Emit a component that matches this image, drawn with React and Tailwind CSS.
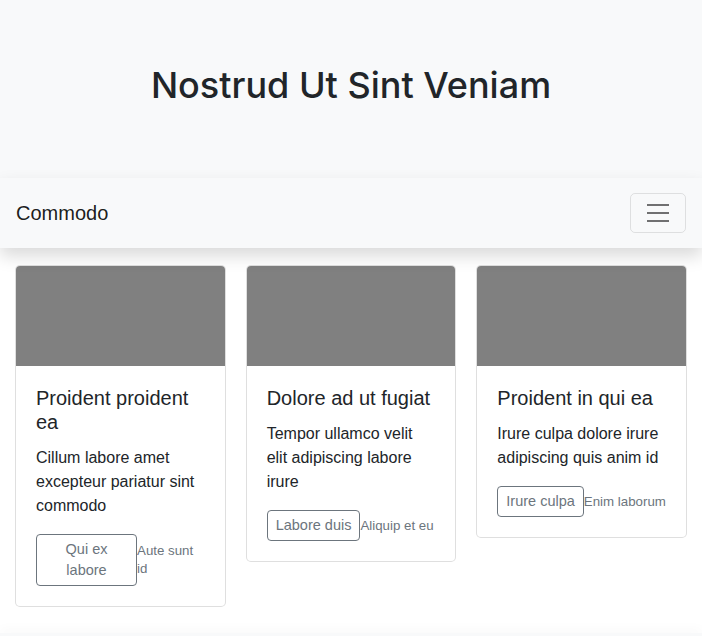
import React from 'react'

const CARDS = [
  {
    title: 'Proident proident ea',
    text: 'Cillum labore amet excepteur pariatur sint commodo',
    button: 'Qui ex labore',
    note: 'Aute sunt id',
  },
  {
    title: 'Dolore ad ut fugiat',
    text: 'Tempor ullamco velit elit adipiscing labore irure',
    button: 'Labore duis',
    note: 'Aliquip et eu',
  },
  {
    title: 'Proident in qui ea',
    text: 'Irure culpa dolore irure adipiscing quis anim id',
    button: 'Irure culpa',
    note: 'Enim laborum',
  },
]

export default function App() {
  return (
    <div className="min-h-screen bg-white text-[#212529] font-['Liberation_Sans',Arial,sans-serif]">
      {/* Hero */}
      <header className="bg-[#f8f9fa] pt-[64px] pb-[72px] text-center">
        <h1 className="font-['Inter',sans-serif] text-[36px] leading-[42px] font-medium">
          Nostrud Ut Sint Veniam
        </h1>
      </header>

      {/* Navbar */}
      <nav className="relative z-10 flex items-center justify-between bg-[#f8f9fa] px-4 py-[15px] shadow-[0_8px_16px_rgba(0,0,0,0.15)]">
        <span className="text-[20px] leading-[30px] text-black/90">Commodo</span>
        <button className="rounded-[5px] border border-black/10 px-3 py-1">
          <svg width="30" height="30" viewBox="0 0 30 30" className="block">
            <path d="M4 7h22M4 15h22M4 23h22" stroke="rgba(0,0,0,0.55)" strokeWidth="2" />
          </svg>
        </button>
      </nav>

      {/* Cards */}
      <section className="grid grid-cols-3 items-start gap-5 px-[15px] pt-[17px] pb-[26px]">
        {CARDS.map((c) => (
          <div key={c.title} className="rounded-[5px] border border-black/[0.125] bg-white overflow-hidden">
            <div className="h-[100px] bg-[#808080]" />
            <div className="p-5">
              <h5 className="mb-3 text-[20px] leading-6 font-medium">{c.title}</h5>
              <p className="mb-4 text-[16px] leading-6">{c.text}</p>
              <div className="flex items-center">
                <button className="rounded-[4px] border border-[#6c757d] px-2 py-1 text-[14.5px] leading-[21px] text-[#6c757d]">
                  {c.button}
                </button>
                <small className="text-[13.3px] leading-[18px] text-[#6c757d]">{c.note}</small>
              </div>
            </div>
          </div>
        ))}
      </section>

      {/* Footer */}
      <footer className="h-1 bg-[#f8f9fa] shadow-[0_-2px_12px_rgba(0,0,0,0.06)]" />
    </div>
  )
}
